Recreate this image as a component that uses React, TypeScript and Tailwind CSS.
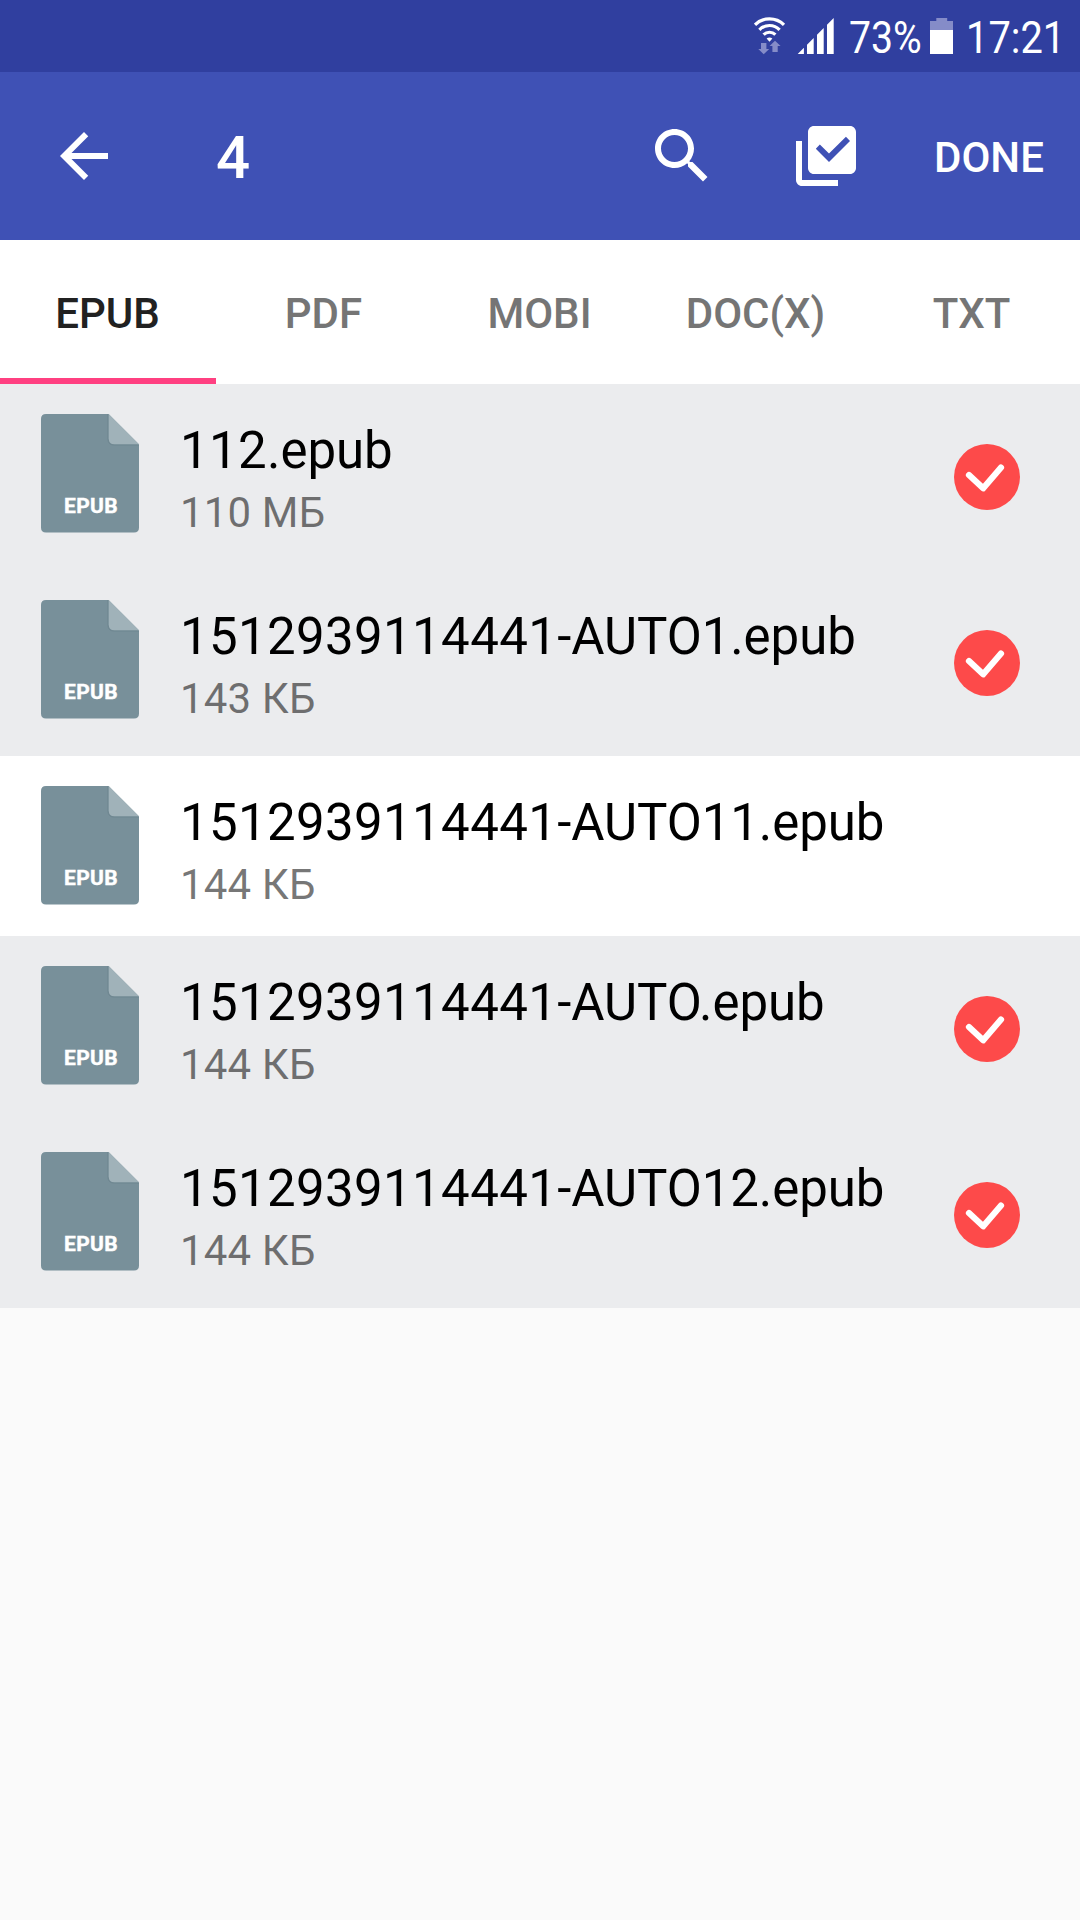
import clsx from 'clsx';

const tabs = ['EPUB', 'PDF', 'MOBI', 'DOC(X)', 'TXT'];

const files = [
    { id: '112', suffix: '.epub', size: '110 МБ', selected: true },
    { id: '1512939114441', suffix: '-AUTO1.epub', size: '143 КБ', selected: true },
    { id: '1512939114441', suffix: '-AUTO11.epub', size: '144 КБ', selected: false },
    { id: '1512939114441', suffix: '-AUTO.epub', size: '144 КБ', selected: true },
    { id: '1512939114441', suffix: '-AUTO12.epub', size: '144 КБ', selected: true },
];

function StatusBar() {
    return (
        <div className="flex h-[72px] bg-[#303f9f] pl-[754px] text-[45px] leading-[76px] text-white">
            <svg className="mt-[16px] h-[40px] w-[32px] shrink-0" viewBox="0 0 32 40" fill="none">
                <path d="M1 8.8A20.5 20.5 0 0 1 30 8.8M5.4 13.8A14 14 0 0 1 25.6 13.8M9.6 18.6A8.6 8.6 0 0 1 21.4 18.6" stroke="#fff" strokeWidth="3.2" />
                <path d="M12.6 22.4Q15.5 20.4 18.4 22.4L15.5 25.8Z" fill="#fff" />
                <path d="M7 27h5.4v6h2.8l-5.5 5.2L4.3 33H7zM18.4 36h5.3v-6h2.9l-5.6-5.2L15.6 30h2.8z" fill="#858cc8" />
            </svg>
            <svg className="ml-[11px] mt-[18px] h-[36px] w-[38px] shrink-0" viewBox="0 0 38 36" fill="#fff">
                <path d="M.7 36l6.2-6.2V36zM10 26.7l6.7-6.7v16H10zM20 16.7l6.7-6.7v26H20zM30 6.7L36.7 0v36H30z" />
            </svg>
            <span className="ml-[14px] w-[72px] shrink-0 origin-left scale-x-[0.87]">73%</span>
            <svg className="ml-[9px] mt-[18px] h-[36px] w-[23px] shrink-0" viewBox="0 0 23 36">
                <path d="M6.3 0h10.9v3H23v33H0V3h6.3z" fill="#858cc8" />
                <path d="M0 12h23v24H0z" fill="#fff" />
            </svg>
            <span className="ml-[13px] w-[100px] shrink-0 origin-left scale-x-[0.885]">17:21</span>
        </div>
    );
}

function AppBar() {
    return (
        <header className="flex h-[168px] items-center bg-[#3f51b5] pl-12 text-white">
            <button className="shrink-0">
                <svg className="size-[72px]" viewBox="0 0 24 24" fill="currentColor">
                    <path d="M20 11H7.83l5.59-5.59L12 4l-8 8 8 8 1.41-1.41L7.83 13H20v-2z" />
                </svg>
            </button>
            <h1 className="ml-[96px] w-[430px] pt-[4px] text-[60px] leading-[72px] font-medium">4</h1>
            <button className="shrink-0">
                <svg className="size-[72px]" viewBox="0 0 24 24" fill="currentColor">
                    <path d="M15.5 14h-.79l-.28-.27C15.41 12.59 16 11.11 16 9.5 16 5.91 13.09 3 9.5 3S3 5.91 3 9.5 5.91 16 9.5 16c1.61 0 3.09-.59 4.23-1.57l.27.28v.79l5 4.99L20.49 19l-4.99-5zm-6 0C7.01 14 5 11.99 5 9.5S7.01 5 9.5 5 14 7.01 14 9.5 11.99 14 9.5 14z" />
                </svg>
            </button>
            <button className="ml-[72px] shrink-0">
                <svg className="size-[72px]" viewBox="0 0 24 24" fill="currentColor" fillRule="evenodd">
                    <path d="M20 2H8c-1.1 0-2 .9-2 2v12c0 1.1.9 2 2 2h12c1.1 0 2-.9 2-2V4c0-1.1-.9-2-2-2zM13 14L8.6 9.55l1.35-1.4L13 11.2l5.65-5.6L20 7zM4 7H2v13c0 1.1.9 2 2 2h12v-2H4z" />
                </svg>
            </button>
            <button className="ml-[72px] pt-[4px] text-[42px] leading-[50px] font-medium">DONE</button>
        </header>
    );
}

function Tabs() {
    return (
        <nav className="grid h-[144px] grid-cols-5 bg-white">
            {tabs.map((tab, i) => (
                <button
                    key={tab}
                    className={clsx(
                        'border-b-[6px] pt-[10px] pr-[1px] text-[42px] leading-[50px] font-medium',
                        i === 0 ? 'border-[#ff4081] text-[#212121]' : 'border-transparent text-[#757575]'
                    )}
                >
                    {tab}
                </button>
            ))}
        </nav>
    );
}

function FileIcon() {
    return (
        <svg className="h-[119px] w-[98px] shrink-0" viewBox="0 0 98 119">
            <path d="M5 0h62.5L98 30.5v83q0 5-5 5H5q-5 0-5-5V5q0-5 5-5z" fill="#78909a" />
            <path d="M67 0v25q0 6 6 6h25" fill="none" stroke="#6d858f" strokeWidth="1" />
            <path d="M67.7 0L98 30.3H73.5q-5.8 0-5.8-5.8z" fill="#a0b2b9" />
            <text x="49.8" y="99" textAnchor="middle" fill="#fff" stroke="#fff" strokeWidth="0.4" fontSize="21" fontWeight="700" textLength="53.5">EPUB</text>
        </svg>
    );
}

function CheckMark() {
    return (
        <svg className="size-[66px] shrink-0" viewBox="0 0 66 66" fill="none">
            <circle cx="33" cy="33" r="33" fill="#fd4a4a" />
            <path d="M15 31l14.2 13.3L47 23.5" stroke="#fff" strokeWidth="6.2" strokeLinecap="round" strokeLinejoin="round" />
        </svg>
    );
}

export default function App() {
    return (
        <div className="h-[1920px] w-[1080px] overflow-hidden bg-[#fafafa] font-[Roboto,sans-serif]">
            <StatusBar />
            <AppBar />
            <Tabs />
            <ul>
                {files.map((file) => (
                    <li
                        key={file.id + file.suffix}
                        className={clsx('flex pt-[30px] pl-[41px]', file.selected ? 'h-[186px] bg-[#ebecee]' : 'h-[180px] bg-white')}
                    >
                        <FileIcon />
                        <div className="ml-[41px] w-[774px] pt-[7px] whitespace-nowrap">
                            <p className="text-[51px] leading-[60px] tracking-[-0.07px] text-black">
                                <span className="tracking-[0.35px]">{file.id}</span>
                                {file.suffix}
                            </p>
                            <p className="mt-[7px] text-[42px] leading-[49px] tracking-[0.15px] text-black/54">{file.size}</p>
                        </div>
                        {file.selected && (
                            <div className="pt-[30px]">
                                <CheckMark />
                            </div>
                        )}
                    </li>
                ))}
            </ul>
        </div>
    );
}
